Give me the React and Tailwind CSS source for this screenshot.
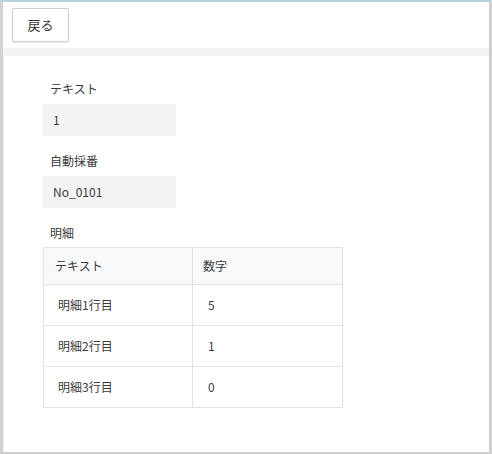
export default function App() {
  const rows = [
    { name: "明細1行目", value: "5" },
    { name: "明細2行目", value: "1" },
    { name: "明細3行目", value: "0" },
  ];
  return (
    <div
      className="w-[492px] h-[454px] flex flex-col bg-white border-t-2 border-t-[#b9d3df] border-l-[3px] border-l-[#d2d2d2] border-r-[3px] border-r-[#cfcfcf] border-b-2 border-b-[#cfcfcf] text-[#3a3a3a]"
      style={{ fontFamily: '"Noto Sans CJK JP", "Noto Sans", sans-serif' }}
    >
      {/* toolbar */}
      <div className="h-[46px] pl-[9px] pt-[6px] shrink-0">
        <button className="w-[57px] h-[34px] border border-[#cfcfcf] rounded-[2px] bg-white shadow-[0_1px_1px_rgba(0,0,0,0.08)] text-[13px] text-[#333] flex items-center justify-center">
          戻る
        </button>
      </div>
      <div className="h-[8px] bg-[#f2f2f2] shrink-0" />

      {/* form body */}
      <div className="flex-1 pl-[39px] pt-[24px] border-l border-l-[#ececec]">
        <div className="flex flex-col">
          <div className="h-[18px] pl-[7px] text-[12px] leading-[18px]">テキスト</div>
          <div className="mt-[6px] w-[133px] h-[32px] bg-[#f3f3f3] pl-[10px] flex items-center text-[12px]">1</div>

          <div className="mt-[16px] h-[18px] pl-[7px] text-[12px] leading-[18px]">自動採番</div>
          <div className="mt-[6px] w-[133px] h-[32px] bg-[#f3f3f3] pl-[10px] flex items-center text-[12px]">No_0101</div>

          <div className="mt-[16px] h-[18px] pl-[7px] text-[12px] leading-[18px]">明細</div>
          <table className="mt-[5px] w-[300px] border-collapse border border-[#e2e2e2] text-[12px]">
            <thead>
              <tr className="h-[37px] bg-[#f8f9fa]">
                <th className="w-[149px] border border-[#e2e2e2] text-left font-normal pl-[11px]">テキスト</th>
                <th className="border border-[#e2e2e2] text-left font-normal pl-[10px]">数字</th>
              </tr>
            </thead>
            <tbody>
              {rows.map((r) => (
                <tr key={r.name} className="h-[41px]">
                  <td className="border border-[#e2e2e2] pl-[14px]">{r.name}</td>
                  <td className="border border-[#e2e2e2] pl-[15px]">{r.value}</td>
                </tr>
              ))}
            </tbody>
          </table>
        </div>
      </div>
    </div>
  );
}
